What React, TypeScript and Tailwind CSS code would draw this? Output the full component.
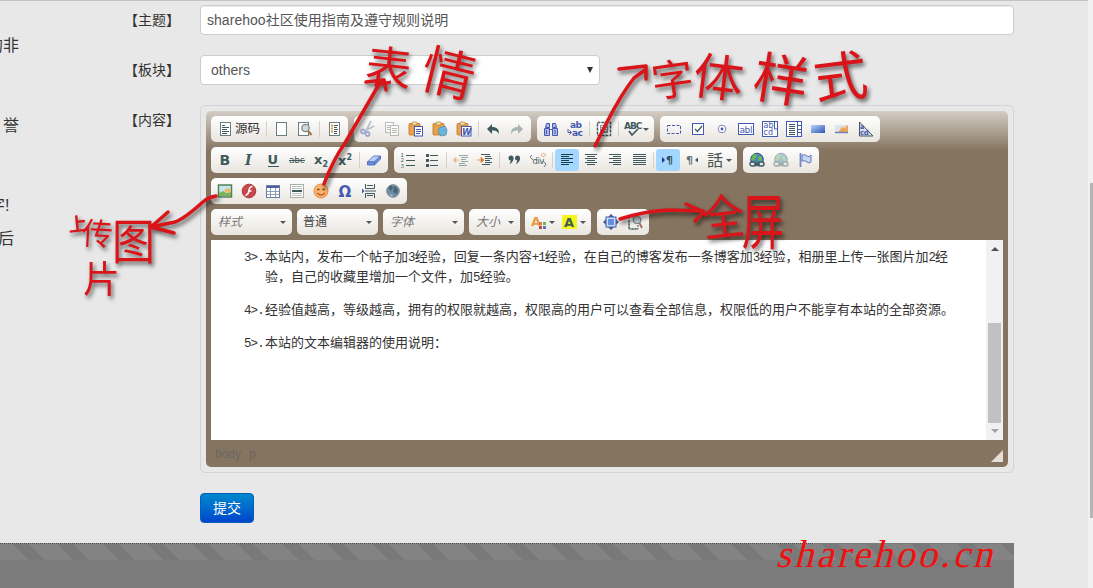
import React from 'react';

const cjk = "font-['Liberation_Sans','Noto_Sans_CJK_SC',sans-serif]";
const BLUE = '#4459b0';
const SLATE = '#3f5a5c';

const t = (x: number, y: number, s: number, text: string, fill: string, extra: object = {}) => (
  <text x={x} y={y} fontSize={s} fill={fill} fontFamily="DejaVu Sans" {...extra}>{text}</text>
);

const lines = (rows: [number, number, number][], color: string) => (
  <path d={rows.map(([x, y, w]) => `M${x} ${y}.5h${w}`).join('')} stroke={color} strokeWidth="1" />
);

const sheet = (x = 3, faded = false) => (
  <rect x={x + 0.5} y="1.5" width="10" height="13" fill="#fff" stroke={faded ? '#a9b5b5' : '#6b7f80'} />
);

const clipboard = (
  <>
    <rect x="1" y="2.5" width="11" height="11.5" rx="1" fill="#e9a24a" stroke="#b87422" strokeWidth=".8" />
    <rect x="4" y="1" width="5" height="3" rx="1" fill="#f7dfae" stroke="#a77b3a" strokeWidth=".7" />
  </>
);

const globe = (opacity: number) => (
  <g opacity={opacity}>
    <circle cx="8" cy="7.5" r="6.3" fill="#4a86bd" stroke="#31507d" />
    <path d="M4 3q3-2 4 0l-1 3-3 3-2-2zM10 4l3 1v5l-3-1-1-3z" fill="#68b858" />
    <rect x="1" y="10" width="6" height="4" rx="2" fill="#dfe6e4" stroke={SLATE} strokeWidth="1.4" />
    <rect x="9" y="10" width="6" height="4" rx="2" fill="#dfe6e4" stroke={SLATE} strokeWidth="1.4" />
    <path d="M5 12h6" stroke={SLATE} strokeWidth="1.5" />
  </g>
);

const icons: Record<string, React.ReactNode> = {
  source: <>{sheet()}{lines([[5, 4, 3], [5, 6, 7], [5, 8, 5], [5, 10, 7], [5, 12, 5]], SLATE)}</>,
  page: sheet(),
  preview: <>{sheet(1)}<circle cx="8.5" cy="7" r="3.7" fill="#cfdadb" stroke="#7b8b8c" strokeWidth="1.3" /><path d="M11 10l3.5 4" stroke="#a8713f" strokeWidth="2" /></>,
  template: <>{sheet()}<path d="M5 4.500h2M5 7.500h2M5 10.500h2" stroke="#e09a3e" strokeWidth="2" />{lines([[8, 4, 4], [8, 6, 3], [8, 8, 4], [8, 10, 3], [8, 12, 3]], SLATE)}</>,
  cut: <g opacity=".55" fill="none" stroke="#5c74b8" strokeWidth="1.8"><path d="M11 0L6 10M14 5L5 10" stroke="#8a99a8" /><circle cx="3" cy="10.500" r="2" /><circle cx="7.500" cy="13" r="2" /></g>,
  copy: <g opacity=".6"><rect x="1.500" y="1.500" width="8" height="10" fill="#fff" stroke="#8b9998" />{lines([[3, 4, 5], [3, 6, 5], [3, 8, 4]], '#8b9998')}<rect x="6.500" y="4.500" width="8" height="10" fill="#fff" stroke="#8b9998" />{lines([[8, 7, 5], [8, 9, 5], [8, 11, 5]], '#8b9998')}</g>,
  paste: <>{clipboard}<rect x="6.500" y="5.500" width="8" height="9.500" fill="#fff" stroke={BLUE} />{lines([[8, 8, 5], [8, 10, 5], [8, 12, 4]], BLUE)}</>,
  pasteText: <>{clipboard}<path d="M7 7l6-2 2 4-1 5-5 1-3-4z" fill="#6bb5d8" stroke="#4990b5" strokeWidth=".8" /></>,
  pasteWord: <>{clipboard}<rect x="5.500" y="5.500" width="9.500" height="9.500" fill="#fff" stroke={BLUE} />{t(6, 13.5, 8.5, 'W', BLUE, { fontWeight: 700, fontStyle: 'italic' })}</>,
  undo: <path d="M2 8l5-5v3c5 0 7 2 7 7-2-3-3-3.500-7-3.500V13z" fill={SLATE} />,
  redo: <path d="M14 8L9 3v3c-5 0-7 2-7 7 2-3 3-3.500 7-3.500V13z" fill="#a8b4b4" />,
  find: <g fill="#aeb9e5" stroke={BLUE}><path d="M3.500 2.500h3v4h-4zM9.500 2.500h3l1 4h-4zM1.500 7.500h5v7h-5zM9.500 7.500h5v7h-5z" /><path d="M6 8.500h4M3.500 9v4M12 9v4" /></g>,
  replace: <>{t(3, 7, 9, 'ab', BLUE, { fontWeight: 700, letterSpacing: -0.5 })}{t(5, 15, 9, 'ac', BLUE, { fontWeight: 700, letterSpacing: -0.5 })}<path d="M1 8v3.500h3M2.500 9.500l2 2-2 2" fill="none" stroke={BLUE} /></>,
  selectAll: <><rect x="1.500" y="1.500" width="13" height="13" fill="#fff" stroke={SLATE} strokeWidth="1.500" strokeDasharray="3 1" /><rect x="4" y="4" width="8" height="8" fill="#8599a2" />{lines([[5, 5, 6], [5, 7, 6], [5, 9, 6]], '#fff')}</>,
  spell: <>{t(-1, 8, 9, 'ABC', SLATE, { fontWeight: 700, letterSpacing: -1 })}<path d="M4 10l3 4 6-6" fill="none" stroke={SLATE} strokeWidth="1.700" /></>,
  form: <rect x="1.500" y="4.500" width="13" height="8" fill="none" stroke={BLUE} strokeDasharray="3 1.500" />,
  checkbox: <><rect x="2.500" y="2.500" width="11" height="11" fill="#fff" stroke={BLUE} /><path d="M5 8l2.500 2.500L12 5" fill="none" stroke={SLATE} strokeWidth="1.300" /></>,
  radio: <><circle cx="8" cy="8" r="3.800" fill="#fff" stroke="#7b88be" /><circle cx="8" cy="8" r="1.400" fill={BLUE} /></>,
  textfield: <><rect x=".5" y="2.500" width="15" height="11" fill="#fff" stroke={BLUE} />{t(1.5, 11.5, 9, 'abl', BLUE, { letterSpacing: -0.4 })}</>,
  textarea: <><rect x=".5" y=".5" width="15" height="15" fill="#fff" stroke={BLUE} />{t(1.5, 7.2, 8, 'ab', BLUE)}{t(1.5, 14.2, 8, 'cd', BLUE)}<path d="M12.500 1v7h3" fill="none" stroke={BLUE} /></>,
  select: <><rect x=".5" y=".5" width="15" height="15" fill="#fff" stroke={BLUE} />{lines([[3, 3, 6], [3, 5, 6], [3, 7, 6], [3, 9, 6], [3, 11, 6], [3, 13, 6]], SLATE)}<path d="M11.500 1v14M12 4.500h3M12 8.500h3M12 11.500h3" stroke={BLUE} /></>,
  button: <><defs><linearGradient id="btn" x1="0" y1="0" x2="1" y2="1"><stop stopColor="#b9d2fb" /><stop offset="1" stopColor="#2c55b8" /></linearGradient></defs><rect x="1" y="4" width="14" height="8" fill="url(#btn)" /></>,
  imageButton: <><rect x="1" y="4" width="13" height="7" fill="#dfe3ea" /><path d="M5 10l3-4 3 1 2-3 1 1v6H5z" fill="#eda557" /><path d="M1 11.500h13" stroke="#6d86b8" strokeWidth="1.500" /></>,
  hidden: <><path d="M1.500 1l13.500 14H1.500z" fill="#d9dceb" stroke={SLATE} />{t(2, 8.2, 6.5, 'a', BLUE, { fontWeight: 700 })}{t(2, 14.2, 7, 'cd', BLUE, { fontWeight: 700, letterSpacing: -0.5 })}</>,
  bold: t(2.5, 13, 14, 'B', SLATE, { fontWeight: 700 }),
  italic: t(4, 13, 14, 'I', SLATE, { fontWeight: 700, fontStyle: 'italic', fontFamily: 'DejaVu Serif' }),
  underline: <>{t(2.5, 12, 13, 'U', SLATE, { fontWeight: 700 })}<path d="M3 14.500h11" stroke={SLATE} /></>,
  strike: <>{t(0, 11, 9, 'abc', SLATE, { letterSpacing: -0.3 })}<path d="M0 8.500h16" stroke={SLATE} /></>,
  sub: <>{t(1, 12, 13, 'x', SLATE, { fontWeight: 700 })}{t(9.5, 15, 8, '2', SLATE, { fontWeight: 700 })}</>,
  sup: <>{t(1, 13, 13, 'x', SLATE, { fontWeight: 700 })}{t(9.5, 7.5, 8, '2', SLATE, { fontWeight: 700 })}</>,
  eraser: <g stroke="#4561b5" strokeLinejoin="round" strokeWidth=".8"><path d="M1.500 10l6-6h7l-6 6z" fill="#b5d1fb" /><path d="M1.500 10h7v3h-7zM8.500 10l6-6v3l-6 6z" fill="#6b93e2" /></g>,
  ol: <>{t(0.5, 5, 5.5, '1', SLATE)}{t(0.5, 10.4, 5.5, '2', SLATE)}{t(0.5, 15.8, 5.5, '3', SLATE)}{lines([[6, 3, 9], [6, 8, 9], [6, 13, 9]], SLATE)}</>,
  ul: <>{lines([[6, 3, 8], [6, 8, 8], [6, 13, 8]], SLATE)}<path d="M2 2h3v3H2zM2 7h3v3H2zM2 12h3v3H2z" fill={SLATE} /></>,
  outdent: <g opacity=".5">{lines([[6, 3, 9], [8, 5, 7], [8, 7, 5], [8, 9, 7], [6, 11, 6], [6, 13, 8]], SLATE)}<path d="M0 8l3-2.500v5zM3 8h4" fill="#dc8232" stroke="#dc8232" strokeWidth=".8" /></g>,
  indent: <>{lines([[4, 2, 9], [8, 4, 6], [8, 6, 7], [8, 8, 5], [8, 10, 7], [5, 12, 8]], SLATE)}<path d="M7 8L4 5.500v5zM0 8h4" fill="#dc8232" stroke="#dc8232" strokeWidth=".8" /></>,
  quote: <g fill={SLATE}><circle cx="5" cy="6" r="2.500" /><circle cx="11.500" cy="6" r="2.500" /><path d="M7.500 6q0 4-4 6 2-3 1-5zM14 6q0 4-4 6 2-3 1-5z" /></g>,
  div: <>{t(2.5, 12, 8.5, 'div', SLATE, { letterSpacing: -0.5 })}<path d="M2 3L0 5l3 3M13 9l3 3-2 3" fill="none" stroke={SLATE} strokeWidth=".8" /><path d="M11 3l3-2 2 2-3 2z" fill="#fff" stroke="#e5b080" /></>,
  left: lines([[2, 2, 12], [2, 4, 8], [2, 6, 12], [2, 8, 8], [2, 10, 12], [2, 12, 8]], '#193f4c'),
  center: lines([[2, 2, 12], [4, 4, 8], [2, 6, 12], [4, 8, 8], [2, 10, 12], [4, 12, 8]], SLATE),
  right: lines([[2, 2, 12], [6, 4, 8], [2, 6, 12], [6, 8, 8], [2, 10, 12], [6, 12, 8]], SLATE),
  justify: lines([[2, 2, 13], [2, 4, 13], [2, 6, 13], [2, 8, 13], [2, 10, 13], [2, 12, 13]], SLATE),
  ltr: <>{t(6, 12, 11, '¶', '#31505c', { fontWeight: 700 })}<path d="M2 5l3 3-3 3z" fill="#18358c" /></>,
  rtl: <>{t(2, 12, 11, '¶', '#5d7475', { fontWeight: 700 })}<path d="M14 5.500L11 8l3 2.500z" fill={SLATE} /></>,
  language: t(-1, 13.5, 16, '話', '#4f5554', { fontFamily: 'Noto Sans CJK JP' }),
  link: globe(1),
  unlink: globe(0.45),
  anchor: <><path d="M3.500 1v14" stroke="#7186c4" strokeWidth="1.800" /><path d="M5 3q3-1 5 1t4-1v7q-2 2-4 0T5 9z" fill="#c5d5f4" stroke="#6076bb" /></>,
  image: <><rect x="1.500" y="2" width="13" height="12" fill="#c5e5ed" stroke="#518055" strokeWidth="1.500" /><path d="M2 10l4-2 3 2 5-1v4H2z" fill="#7cb45c" /><path d="M7 8l3-3 3 1 .5 3-3 1z" fill="#edb85e" /></>,
  flash: <><circle cx="8" cy="8" r="6.800" fill="#c9474a" stroke="#a83a3c" /><path d="M11.500 3.500q-3 0-3.500 4t-3.500 5M7 8h3.500" fill="none" stroke="#fff" strokeWidth="1.500" /></>,
  table: <><rect x="1.500" y="2.500" width="13" height="12" fill="#fff" stroke="#687eb0" /><path d="M2 4h12" stroke="#496295" strokeWidth="2" /><path d="M5.500 5v9M10.500 5v9M2 8.500h12M2 11.500h12" stroke="#8ca0b2" /></>,
  rule: <><rect x="1.500" y="1.500" width="13" height="13" fill="#fff" stroke="#a6afaa" />{lines([[3, 3, 10], [3, 5, 10], [3, 10, 10], [3, 12, 10]], '#b9c1be')}<path d="M3 8h10" stroke={SLATE} strokeWidth="2" /></>,
  smile: <><circle cx="8" cy="8" r="7" fill="#f8b46a" stroke="#e58a45" /><path d="M4 10q4 4 8 0" fill="none" stroke="#c0603a" strokeWidth="1.300" /><path d="M4 6.500h2.500M9.500 6.500H12" stroke="#864522" strokeWidth="1.500" /></>,
  omega: t(1.5, 14, 15, 'Ω', BLUE, { fontWeight: 700 }),
  pagebreak: <g fill="none" stroke={SLATE}><path d="M4.500 1v4.500h9V1M4.500 15v-4.500h9V15M4 8h11" /><path d="M6 2.500h6M6 12.500h6" /><path d="M1 5.500l2.500 2.500L1 10.500z" fill={BLUE} stroke="none" /></g>,
  iframe: <><circle cx="8" cy="8" r="6.300" fill="#718da5" stroke="#7b8d99" /><path d="M3 5l3-3 2 2-2 4zM9 3l4 3-1 5-4-2z" fill="#476678" /><path d="M4 11l4 1-1 2" fill="#a3c1ce" /></>,
  textColor: <>{t(0, 12, 13, 'A', '#e99b48', { fontWeight: 700 })}<path d="M8 8h3v3H8z" fill="#dc7d4c" /><path d="M12 8h3v3h-3z" fill="#74b850" /><path d="M8 12h3v3H8z" fill="#b14e48" /><path d="M12 12h3v3h-3z" fill="#5c79bd" /></>,
  bgColor: <><rect x="0" y="1" width="15" height="14" fill="#f4f520" />{t(2, 13, 13, 'A', '#45604c', { fontWeight: 700 })}</>,
  maximize: <><path d="M8 0l3 3H5zM8 16l3-3H5zM0 8l3-3v6zM16 8l-3-3v6z" fill="#435b88" /><rect x="3" y="3" width="10" height="10" fill="#c6dbff" stroke="#4662a6" /><rect x="5" y="5" width="6" height="6" fill="#668edc" /></>,
  blocks: <><path d="M2 3h6M2 3v12h8M2 7v8M4 15h7v-4" fill="none" stroke={SLATE} strokeDasharray="2 1" /><circle cx="10" cy="6" r="3.700" fill="#cfd8d9" stroke="#7b8b8c" strokeWidth="1.300" /><path d="M12.500 9l2.500 5" stroke="#9f7158" strokeWidth="1.800" /></>,
};

function Icon({ name }: { name: string }) {
  return <svg className="h-4 w-4 shrink-0 overflow-visible" viewBox="0 0 16 16">{icons[name]}</svg>;
}

function Caret() {
  return <span className="h-0 w-0 shrink-0 border-x-[3px] border-t-[3px] border-x-transparent border-t-[#555]" />;
}

const menuItems = ['spell', 'language', 'textColor', 'bgColor'];
const activeItems = ['left', 'ltr'];

function Group({ items }: { items: string }) {
  return (
    <div className="mr-1.5 flex h-[26px] items-center rounded-[5px] bg-linear-to-b from-white to-[#e9e5df] px-0.5">
      {items.split(' ').map((name, i) => {
        if (name === '|') return <span key={i} className="mx-0.5 h-4 w-px bg-[#d4d0ca]" />;
        if (name === 'source')
          return (
            <button key={i} className="flex h-[22px] w-[51px] items-center gap-0.5 pl-1 text-[12.5px] whitespace-nowrap text-[#333]">
              <Icon name="source" />源码
            </button>
          );
        if (menuItems.includes(name))
          return <button key={i} className="flex h-[22px] w-[31px] items-center gap-0.5 pl-1"><Icon name={name} /><Caret /></button>;
        return (
          <button key={i} className={`flex h-[22px] w-6 items-center justify-center rounded-[3px] ${activeItems.includes(name) ? 'bg-[#a3d7ff]' : ''}`}>
            <Icon name={name} />
          </button>
        );
      })}
    </div>
  );
}

function Combo({ label, wide = true, plain = false }: { label: string; wide?: boolean; plain?: boolean }) {
  return (
    <button className={`mr-[5px] flex h-[26px] items-center justify-between rounded-[5px] bg-linear-to-b from-white to-[#e9e5df] pr-1.5 text-[12px] ${wide ? 'w-[81px]' : 'w-[51px]'} ${plain ? 'pl-1.5 text-[#444]' : 'pl-[7px] text-[#777] italic'}`}>
      {label}<Caret />
    </button>
  );
}

function Mixed({ text }: { text: string }) {
  return (
    <>
      {text.split(/([0-9+>.]+)/).map((part, i) =>
        /[0-9+>.]/.test(part)
          ? <span key={i} className="font-['Liberation_Mono',monospace] text-[12.5px] leading-none tracking-[-0.9px]">{part}</span>
          : part,
      )}
    </>
  );
}

function Item({ n, children }: { n: string; children: string[] }) {
  return (
    <div className="mb-[13px] flex">
      <div className="h-5 w-[21px] shrink-0"><Mixed text={n} /></div>
      <div>{children.map((line) => <p key={line} className="h-5 whitespace-nowrap"><Mixed text={line} /></p>)}</div>
    </div>
  );
}

function Field({ label, children }: { label: string; children: React.ReactNode }) {
  return (
    <div className="flex items-start">
      <label className="mr-5 flex h-[30px] w-[58px] items-center justify-end text-[14px] whitespace-nowrap text-[#333]">{label}</label>
      {children}
    </div>
  );
}

const notes: [string, string][] = [
  ['表', 'left-[366px] top-[42px] text-[46px] rotate-6'],
  ['情', 'left-[423px] top-[44px] text-[53px] rotate-[14deg]'],
  ['字', 'left-[651px] top-[56px] text-[42px] rotate-[-8deg]'],
  ['体', 'left-[694px] top-[49px] text-[50px] rotate-[7deg]'],
  ['样', 'left-[754px] top-[49px] text-[55px] rotate-[9deg]'],
  ['式', 'left-[813px] top-[47px] text-[54px] rotate-[-7deg]'],
  ['上', 'left-[68px] top-[213px] text-[19px] rotate-[-6deg] font-bold'],
  ['传', 'left-[82px] top-[216px] text-[31px] rotate-[3deg]'],
  ['图', 'left-[112px] top-[217px] text-[43px] scale-y-110'],
  ['片', 'left-[83px] top-[259px] text-[37px]'],
  ['全', 'left-[702px] top-[193px] text-[42px] rotate-[-6deg] scale-y-115'],
  ['屏', 'left-[738px] top-[193px] text-[50px] scale-x-85 scale-y-120'],
];

function Annotations() {
  return (
    <div className="pointer-events-none absolute inset-0 drop-shadow-[2px_3px_2px_rgba(0,0,0,0.6)]">
      <svg className="absolute inset-0" width="1093" height="588" fill="none" stroke="#d9151a" strokeWidth="3.5" strokeLinecap="round" strokeLinejoin="round">
        <path d="M324 184Q333 160 345 143L378 86L382 80M366 82Q376 81 384 80L386 90" />
        <path d="M595 146L607 122Q622 93 634 78L645 70M619 69L646 66L646 79" />
        <path d="M216 196Q209 197 204 201Q184 219 175 222L151 227M168 212L151 227L174 233" />
        <path d="M620 219Q645 211 668 210L703 211M686 204L704 212L695 221" />
      </svg>
      {notes.map(([char, place]) => (
        <span key={char} className={`absolute leading-none text-[#d9151a] font-['Noto_Sans_CJK_SC',sans-serif] ${place}`}>{char}</span>
      ))}
    </div>
  );
}

export default function App() {
  return (
    <div className={`relative flex h-[588px] w-[1093px] overflow-hidden bg-[#e8e8e8] ${cjk}`}>
      <div className="flex min-w-0 flex-1 flex-col border-t border-[#c3c3c3]">
        <div className="flex h-[542px] shrink-0">
          <aside className="flex w-[122px] shrink-0 flex-col overflow-hidden pt-[33px] text-[16px] leading-6 text-[#333]">
            <p className="-ml-[13px]">的非</p>
            <p className="mt-14 ml-[3px]">誉</p>
            <p className="mt-14 -ml-[11px]">字!</p>
            <p className="mt-[9px] -ml-[2px]">后</p>
          </aside>
          <main className="flex flex-col gap-5 pt-1">
            <Field label="【主题】">
              <input className="h-[30px] w-[814px] rounded-[4px] border border-[#ccc] bg-white px-1.5 pb-0.5 text-[14px] tracking-[0.04px] text-[#555] shadow-[inset_0_1px_1px_rgba(0,0,0,0.075)]" defaultValue="sharehoo社区使用指南及遵守规则说明" />
            </Field>
            <Field label="【板块】">
              <div className="flex h-[30px] w-[400px] items-center justify-between rounded-[4px] border border-[#ccc] bg-white pr-1.5 pl-2.5 text-[14px] text-[#555]">
                others
                <span className="h-0 w-0 border-x-[3px] border-t-[6px] border-x-transparent border-t-[#333]" />
              </div>
            </Field>
            <Field label="【内容】">
              <div className="h-[368px] w-[814px] rounded-[5px] border border-[#d3d3d3] p-[5px]">
                <div className="flex h-[356px] flex-col rounded-[5px] bg-[#857460] bg-[linear-gradient(to_bottom,#d3cdc5_0px,#857460_40px)] px-[5px] pt-[5px]">
                  <div className="flex h-[124px] flex-col gap-[5px]">
                    <div className="flex">
                      <Group items="source | page preview | template" />
                      <Group items="cut copy paste pasteText pasteWord | undo redo" />
                      <Group items="find replace | selectAll | spell" />
                      <Group items="form checkbox radio textfield textarea select button imageButton hidden" />
                    </div>
                    <div className="flex">
                      <Group items="bold italic underline strike sub sup | eraser" />
                      <Group items="ol ul | outdent indent | quote div | left center right justify | ltr rtl language" />
                      <Group items="link unlink anchor" />
                    </div>
                    <div className="flex"><Group items="image flash table rule smile omega pagebreak iframe" /></div>
                    <div className="flex">
                      <Combo label="样式" />
                      <Combo label="普通" plain />
                      <Combo label="字体" />
                      <Combo label="大小" wide={false} />
                      <Group items="textColor bgColor" />
                      <Group items="maximize blocks" />
                    </div>
                  </div>
                  <div className="flex h-[200px] justify-between bg-white">
                    <div className="pt-[7px] pl-[33px] text-[13px] leading-5 text-[#333]">
                      <Item n="3>.">{['本站内，发布一个帖子加3经验，回复一条内容+1经验，在自己的博客发布一条博客加3经验，相册里上传一张图片加2经', '验，自己的收藏里增加一个文件，加5经验。']}</Item>
                      <Item n="4>.">{['经验值越高，等级越高，拥有的权限就越高，权限高的用户可以查看全部信息，权限低的用户不能享有本站的全部资源。']}</Item>
                      <Item n="5>.">{['本站的文本编辑器的使用说明：']}</Item>
                    </div>
                    <div className="flex w-[17px] flex-col items-center bg-[#f1f1f1] pt-[7px] pb-[7px]">
                      <span className="h-0 w-0 border-x-4 border-b-4 border-x-transparent border-b-[#505050]" />
                      <span className="mt-[72px] h-[100px] w-[13px] bg-[#c1c1c1]" />
                      <span className="mt-[6px] h-0 w-0 border-x-4 border-t-4 border-x-transparent border-t-[#a3a3a3]" />
                    </div>
                  </div>
                  <div className="flex h-[27px] items-center justify-between pl-1 text-[12px] text-[#6b6660]">
                    <div className="flex gap-2"><span>body</span><span>p</span></div>
                    <svg className="mt-1 h-3 w-3" viewBox="0 0 12 12"><path d="M12 0v12H0z" fill="#e6dfd6" /></svg>
                  </div>
                </div>
              </div>
            </Field>
            <div className="flex pl-[78px]">
              <button className="h-[30px] w-[54px] rounded-[4px] border border-[#0060b8] bg-linear-to-b from-[#0088cc] to-[#0044cc] text-[14px] leading-5 text-white">提交</button>
            </div>
          </main>
        </div>
        <footer className="flex h-[45px] w-[1014px] shrink-0 flex-col bg-[#7b7b7b]">
          <div className="h-px w-[814px] bg-[repeating-linear-gradient(90deg,#444_0px,#444_1px,#999_1px,#999_2px)]" />
          <div className="h-4 bg-[repeating-linear-gradient(45deg,#838383_0px,#838383_20px,#797979_20px,#797979_31.8px)]" />
        </footer>
      </div>
      <div className="flex w-[5px] flex-col items-end bg-[#f1f1f1] pt-[183px]">
        <div className="h-[335px] w-[3px] bg-[#b5b5b5]" />
      </div>
      <div className="absolute top-[535px] left-[779px] skew-x-[-14deg] font-['Liberation_Serif',serif] text-[39px] leading-[38px] tracking-[2.9px] text-[#f01010]">sharehoo.cn</div>
      <Annotations />
    </div>
  );
}
